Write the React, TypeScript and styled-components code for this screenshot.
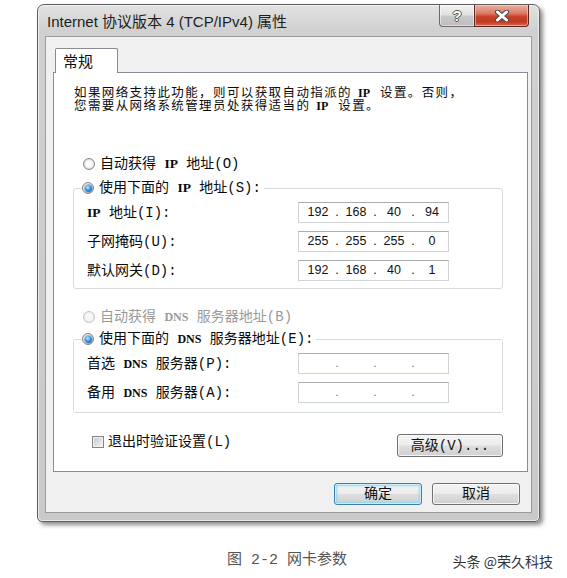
import React from "react";
import styled, { createGlobalStyle } from "styled-components";

const Global = createGlobalStyle`
  html, body { margin: 0; padding: 0; background: #fff; }
  * { box-sizing: border-box; }
`;

const DIALOG_FONT = `"Liberation Mono", "Noto Sans CJK SC", monospace`;

const Page = styled.div`
  width: 567px;
  height: 578px;
  overflow: hidden;
  background: #fff;
  padding-top: 4px;
  display: flex;
  flex-direction: column;
`;

const Window = styled.div`
  margin-left: 37px;
  width: 503px;
  height: 518px;
  border: 1px solid #5e5e5e;
  border-radius: 7px 7px 5px 5px;
  background: linear-gradient(180deg, #e2e2e2 0%, #d0d0d0 5%, #c9c9c9 100%);
  box-shadow: inset 0 0 0 1px rgba(255, 255, 255, 0.6), 3px 3px 4px rgba(0, 0, 0, 0.45);
  display: flex;
  flex-direction: column;
`;

const TitleBar = styled.div`
  height: 31px;
  display: flex;
  align-items: flex-start;
  justify-content: space-between;
  padding-left: 9px;
`;

const Title = styled.div`
  margin-top: 8px;
  font: 15px/18px "Liberation Sans", "Noto Sans CJK SC", sans-serif;
  color: #1e1e1e;
  white-space: nowrap;
`;

const CaptionButtons = styled.div`
  display: flex;
  margin-right: 10px;
`;

const HelpButton = styled.div`
  width: 35px;
  height: 22px;
  border: 1px solid #6a6a6a;
  border-top: none;
  border-right: none;
  border-radius: 0 0 0 4px;
  background: linear-gradient(180deg, #f3f3f3 0%, #e2e2e2 45%, #c9c9c9 55%, #bdbdbd 100%);
  box-shadow: inset 0 0 0 1px rgba(255, 255, 255, 0.5);
  display: flex;
  align-items: center;
  justify-content: center;
  font: bold 15px/1 "Liberation Sans", sans-serif;
  color: #fff;
  text-shadow: -1px 0 #555, 1px 0 #555, 0 -1px #555, 0 1px #555;
`;

const CloseButton = styled.div`
  width: 55px;
  height: 22px;
  border: 1px solid #5a2a22;
  border-top: none;
  border-radius: 0 0 4px 0;
  background: linear-gradient(180deg, #eab1a3 0%, #dc7a63 40%, #c8432b 55%, #c0391f 80%, #d66f55 100%);
  box-shadow: inset 0 0 0 1px rgba(255, 220, 210, 0.5);
  display: flex;
  align-items: center;
  justify-content: center;
`;

const ClientArea = styled.div`
  margin: 0 7px 8px 7px;
  flex: 1;
  background: #f0f0f0;
  border: 1px solid #9b9b9b;
  display: flex;
  flex-direction: column;
  padding: 11px 3px 7px 7px;
  font-family: ${DIALOG_FONT};
  color: #0a0a0a;
`;

const TabStrip = styled.div`
  display: flex;
  padding-left: 2px;
`;

const Tab = styled.div`
  position: relative;
  z-index: 1;
  height: 25px;
  margin-bottom: -1px;
  padding: 0 24px 0 7px;
  background: #fff;
  border: 1px solid #898c95;
  border-bottom: none;
  border-radius: 2px 2px 0 0;
  font-size: 15px;
  line-height: 23px;
  font-family: "Noto Sans CJK SC", sans-serif;
`;

const Panel = styled.div`
  height: 400px;
  background: #fff;
  border: 1px solid #898c95;
  padding: 14px 24px 0 19px;
  display: flex;
  flex-direction: column;
`;

const Intro = styled.div`
  margin-left: 1px;
  display: flex;
  flex-direction: column;
`;

const IntroLine = styled.div`
  height: 13px;
  font-size: 12.5px;
  line-height: 13px;
  white-space: nowrap;
  letter-spacing: 1.4px;
`;

const Abbr = styled.span<{ $gapL?: number; $gapR?: number; $size?: number }>`
  font-family: "Liberation Serif", serif;
  font-weight: bold;
  font-size: ${(p) => p.$size ?? 13.5}px;
  line-height: 1;
  letter-spacing: 0;
  margin: 0 ${(p) => p.$gapR ?? 0}px 0 ${(p) => p.$gapL ?? 0}px;
`;

const OptionRow = styled.label<{ $top?: number; $indent?: number; $disabled?: boolean }>`
  display: flex;
  align-items: center;
  gap: 5px;
  height: 16px;
  margin-top: ${(p) => p.$top ?? 0}px;
  margin-left: ${(p) => p.$indent ?? 0}px;
  font-size: 14px;
  line-height: 16px;
  white-space: nowrap;
  color: ${(p) => (p.$disabled ? "#9a9a9a" : "#0a0a0a")};
`;

const RadioMark = styled.span<{ $checked?: boolean; $disabled?: boolean }>`
  flex: none;
  width: 12px;
  height: 12px;
  border-radius: 50%;
  border: 1px solid ${(p) => (p.$disabled ? "#c4c4c4" : "#878787")};
  background: ${(p) =>
    p.$disabled
      ? "radial-gradient(circle, #f7f7f7 0 40%, #e6e6e6 90%)"
      : "radial-gradient(circle, #ffffff 0 30%, #d4d4d4 90%)"};
  display: flex;
  align-items: center;
  justify-content: center;
  &::after {
    content: "";
    display: ${(p) => (p.$checked ? "block" : "none")};
    width: 7px;
    height: 7px;
    border-radius: 50%;
    background: radial-gradient(circle at 40% 35%, #c9f1ff 0, #3a9be6 40%, #0c4fa3 100%);
    box-shadow: 0 0 0 1px rgba(30, 80, 140, 0.35);
  }
`;

const GroupBox = styled.fieldset<{ $top: number; $bottom: number }>`
  margin: ${(p) => p.$top}px 0 0 0;
  padding: 6px 0 ${(p) => p.$bottom}px 13px;
  border: 1px solid #d6dbdf;
  border-radius: 3px;
  min-width: 0;
`;

const GroupLegend = styled.legend`
  margin-left: -5px;
  padding: 0 3px 0 0;
`;

const FieldGrid = styled.div`
  display: grid;
  grid-template-columns: 211px 151px;
  grid-auto-rows: 21px;
  row-gap: 8px;
  align-items: center;
`;

const FieldLabel = styled.span`
  font-size: 14px;
  line-height: 16px;
  white-space: nowrap;
`;

const IpBox = styled.div`
  height: 21px;
  width: 151px;
  background: #fff;
  border: 1px solid #d0d3d7;
  border-top-color: #a9acb2;
  display: flex;
  align-items: center;
  padding-left: 3px;
  font: 12.5px/19px "Liberation Sans", sans-serif;
  color: #111;
`;

const Octet = styled.span`
  width: 32px;
  text-align: center;
`;

const Dot = styled.span<{ $faint?: boolean }>`
  width: 6px;
  text-align: center;
  color: ${(p) => (p.$faint ? "#777" : "#111")};
`;

const BottomRow = styled.div`
  margin-top: 21px;
  display: flex;
  align-items: flex-start;
  justify-content: space-between;
`;

const CheckRow = styled.label`
  margin-left: 19px;
  display: flex;
  align-items: center;
  gap: 4px;
  height: 16px;
  font-size: 14px;
  line-height: 16px;
  white-space: nowrap;
`;

const CheckMark = styled.span`
  flex: none;
  width: 12px;
  height: 12px;
  border: 1px solid #858585;
  background: linear-gradient(135deg, #c4c8cd 0%, #e2e4e6 60%, #f4f4f4 100%);
  box-shadow: inset 0 0 0 1px #f2f2f2;
`;

const Button = styled.div<{ $w: number; $h: number; $default?: boolean }>`
  width: ${(p) => p.$w}px;
  height: ${(p) => p.$h}px;
  border: 1px solid ${(p) => (p.$default ? "#3c7fb1" : "#707070")};
  border-radius: 3px;
  background: linear-gradient(180deg, #f4f4f4 0%, #ececec 48%, #dedede 52%, #d0d0d0 100%);
  box-shadow: ${(p) =>
    p.$default
      ? "inset 0 0 0 1px #c9effc, inset 0 0 2px 2px #8fd8f2"
      : "inset 0 0 0 1px rgba(255,255,255,0.75)"};
  display: flex;
  align-items: center;
  justify-content: center;
  font-size: 14px;
  line-height: 16px;
  white-space: nowrap;
  color: #111;
`;

const ButtonRow = styled.div`
  margin-top: 11px;
  display: flex;
  justify-content: flex-end;
  gap: 10px;
  padding-right: 8px;
`;

const CaptionRow = styled.div`
  margin-top: 29px;
  display: flex;
  align-items: center;
  padding: 0 14px 0 227px;
  height: 20px;
`;

const FigureCaption = styled.div`
  font: 15px/20px "Liberation Mono", "Noto Sans CJK SC", monospace;
  color: #555;
  white-space: nowrap;
`;

const Watermark = styled.div`
  margin-left: auto;
  font: 14px/20px "Noto Sans CJK SC", sans-serif;
  color: #333;
  white-space: nowrap;
`;

const IpField: React.FC<{ parts?: string[] }> = ({ parts }) => {
  const p = parts ?? ["", "", "", ""];
  const faint = !parts;
  return (
    <IpBox>
      <Octet>{p[0]}</Octet>
      <Dot $faint={faint}>.</Dot>
      <Octet>{p[1]}</Octet>
      <Dot $faint={faint}>.</Dot>
      <Octet>{p[2]}</Octet>
      <Dot $faint={faint}>.</Dot>
      <Octet>{p[3]}</Octet>
    </IpBox>
  );
};

const CloseGlyph = () => (
  <svg width="16" height="12" viewBox="0 0 16 12">
    <path d="M3.5 2 L12.5 10 M12.5 2 L3.5 10" stroke="#4a4a4a" strokeWidth="5" strokeLinecap="round" />
    <path d="M3.5 2 L12.5 10 M12.5 2 L3.5 10" stroke="#ffffff" strokeWidth="3" strokeLinecap="round" />
  </svg>
);

export default function App() {
  return (
    <>
      <Global />
      <Page>
        <Window>
          <TitleBar>
            <Title>Internet 协议版本 4 (TCP/IPv4) 属性</Title>
            <CaptionButtons>
              <HelpButton>?</HelpButton>
              <CloseButton>
                <CloseGlyph />
              </CloseButton>
            </CaptionButtons>
          </TitleBar>
          <ClientArea>
            <TabStrip>
              <Tab>常规</Tab>
            </TabStrip>
            <Panel>
              <Intro>
                <IntroLine>
                  如果网络支持此功能，则可以获取自动指派的<Abbr $size={12} $gapL={6} $gapR={10}>IP</Abbr>设置。否则，
                </IntroLine>
                <IntroLine>
                  您需要从网络系统管理员处获得适当的<Abbr $size={12} $gapL={6} $gapR={10}>IP</Abbr>设置。
                </IntroLine>
              </Intro>

              <OptionRow $top={43} $indent={10}>
                <RadioMark />
                <span>
                  自动获得 <Abbr>IP</Abbr> 地址(O)
                </span>
              </OptionRow>

              <GroupBox $top={8} $bottom={7}>
                <GroupLegend>
                  <OptionRow>
                    <RadioMark $checked />
                    <span>
                      使用下面的 <Abbr>IP</Abbr> 地址(S):
                    </span>
                  </OptionRow>
                </GroupLegend>
                <FieldGrid>
                  <FieldLabel>
                    <Abbr>IP</Abbr> 地址(I):
                  </FieldLabel>
                  <IpField parts={["192", "168", "40", "94"]} />
                  <FieldLabel>子网掩码(U):</FieldLabel>
                  <IpField parts={["255", "255", "255", "0"]} />
                  <FieldLabel>默认网关(D):</FieldLabel>
                  <IpField parts={["192", "168", "40", "1"]} />
                </FieldGrid>
              </GroupBox>

              <OptionRow $top={20} $indent={10} $disabled>
                <RadioMark $disabled />
                <span>
                  自动获得 <Abbr $size={12}>DNS</Abbr> 服务器地址(B)
                </span>
              </OptionRow>

              <GroupBox $top={6} $bottom={9}>
                <GroupLegend>
                  <OptionRow>
                    <RadioMark $checked />
                    <span>
                      使用下面的 <Abbr $size={12}>DNS</Abbr> 服务器地址(E):
                    </span>
                  </OptionRow>
                </GroupLegend>
                <FieldGrid>
                  <FieldLabel>
                    首选 <Abbr $size={12}>DNS</Abbr> 服务器(P):
                  </FieldLabel>
                  <IpField />
                  <FieldLabel>
                    备用 <Abbr $size={12}>DNS</Abbr> 服务器(A):
                  </FieldLabel>
                  <IpField />
                </FieldGrid>
              </GroupBox>

              <BottomRow>
                <CheckRow>
                  <CheckMark />
                  <span>退出时验证设置(L)</span>
                </CheckRow>
                <Button $w={106} $h={23}>
                  高级(V)...
                </Button>
              </BottomRow>
            </Panel>
            <ButtonRow>
              <Button $w={88} $h={22} $default>
                确定
              </Button>
              <Button $w={88} $h={22}>
                取消
              </Button>
            </ButtonRow>
          </ClientArea>
        </Window>
        <CaptionRow>
          <FigureCaption>图 2-2 网卡参数</FigureCaption>
          <Watermark>头条 @荣久科技</Watermark>
        </CaptionRow>
      </Page>
    </>
  );
}
